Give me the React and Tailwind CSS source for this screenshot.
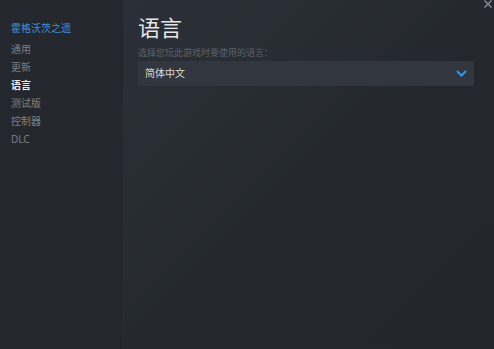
const items = [
    { label: "通用" },
    { label: "更新" },
    { label: "语言", active: true },
    { label: "测试版" },
    { label: "控制器" },
    { label: "DLC" },
];

const App = () => {
    return (
        <div
            className="w-[494px] h-[349px] flex overflow-hidden relative"
            style={{ fontFamily: '"Noto Sans", "Noto Sans CJK SC", sans-serif' }}
        >
            {/* Sidebar */}
            <div className="w-[124px] h-full bg-[#24272e] border-r border-[#2b2e35] pt-[21px] pl-[11px] shrink-0">
                <div className="text-[10px] leading-[14px] text-[#3e8fdb] mb-[5px]">霍格沃茨之遗</div>
                <div className="flex flex-col">
                    {items.map((item) => (
                        <div
                            key={item.label}
                            className={
                                item.active
                                    ? "text-[10px] leading-[18px] h-[18px] text-[#e8e9ea] font-bold"
                                    : "text-[10px] leading-[18px] h-[18px] text-[#7b8087]"
                            }
                        >
                            {item.label}
                        </div>
                    ))}
                </div>
            </div>

            {/* Main */}
            <div className="flex-1 h-full bg-[linear-gradient(135deg,#2b2f37_0%,#282c33_30%,#24272e_55%,#23262d_100%)] pl-[14px] pr-[20px] pt-[12px]">
                <h1 className="text-[22px] leading-[30px] text-[#e5e6e7] font-normal">语言</h1>
                <p className="text-[9px] leading-[12px] text-[#5e636a] mt-[5px]">选择您玩此游戏时要使用的语言：</p>
                <div className="mt-[2px] h-[25px] rounded-[2px] bg-[#32363f] flex items-center justify-between pl-[7px] pr-[7px]">
                    <span className="text-[10px] text-[#d9dadc]">简体中文</span>
                    <svg width="11" height="7" viewBox="0 0 11 7">
                        <path d="M1 1 L5.5 5.5 L10 1" fill="none" stroke="#1a9fff" strokeWidth="2" />
                    </svg>
                </div>
            </div>

            {/* Close */}
            <div className="absolute top-[0px] right-[2px] w-[8px] h-[8px]">
                <svg width="8" height="8" viewBox="0 0 8 8">
                    <path d="M0.5 0.5 L7.5 7.5 M7.5 0.5 L0.5 7.5" stroke="#8c9199" strokeWidth="1.3" />
                </svg>
            </div>
        </div>
    );
};

export default App;
